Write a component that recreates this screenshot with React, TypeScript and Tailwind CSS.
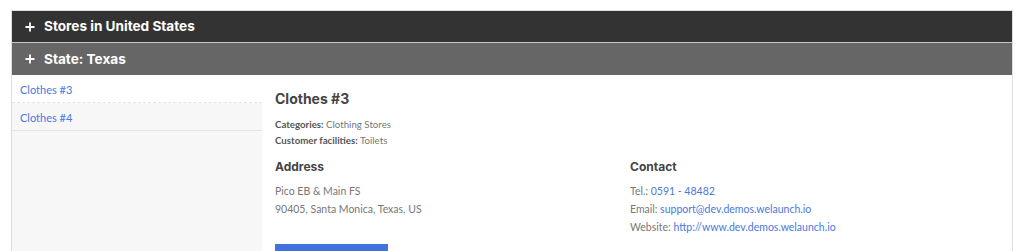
const heading = "font-['Inter','Open_Sans',sans-serif]";
const body = "font-['Lato','Noto_Sans',sans-serif]";

function PlusIcon() {
  return (
    <svg width="10" height="10" viewBox="0 0 10 10" className="shrink-0">
      <path d="M5 0.5v9M0.5 5h9" stroke="#fff" strokeWidth="1.8" />
    </svg>
  );
}

function Bar({ label, dark }: { label: string; dark?: boolean }) {
  return (
    <div
      className={
        "h-[32px] flex items-center gap-[9px] pl-[13px] text-white text-[13.6px] font-bold " +
        heading +
        (dark ? " bg-[#333333] border-b border-[#c8c8c8]" : " bg-[#666666]")
      }
    >
      <PlusIcon />
      <span>{label}</span>
    </div>
  );
}

const stores = ["Clothes #3", "Clothes #4"];

export default function App() {
  return (
    <div className={"w-[1024px] h-[251px] bg-white overflow-hidden pt-[10px] px-[11px] " + body}>
      <div className="border border-[#dddddd] border-b-0">
        <Bar label="Stores in United States" dark />
        <Bar label="State: Texas" />
        <div className="flex h-[200px]">
          <div className="w-[250px] shrink-0 bg-[#f7f7f7]">
            {stores.map((s, i) => (
              <div
                key={s}
                className={
                  "h-[28px] flex items-center pl-[8px] pt-[4px] text-[11px] text-[#4a78e0] border-b " +
                  (i === 0 ? "bg-white border-dashed border-[#e4e4e4]" : "border-[#e6e6e6]")
                }
              >
                {s}
              </div>
            ))}
          </div>
          <div className="flex-1 pl-[13px] pr-[14px] pt-[14px] text-[#777777]">
            <h2 className={"text-[14px] font-bold text-[#444444] leading-[20px] " + heading}>Clothes #3</h2>
            <div className="mt-[7px] text-[9.7px] leading-[16px]">
              <p>
                <span className="font-bold text-[#555555]">Categories:</span> Clothing Stores
              </p>
              <p>
                <span className="font-bold text-[#555555]">Customer facilities:</span> Toilets
              </p>
            </div>
            <div className="grid grid-cols-[355px_1fr] mt-[11px]">
              <div>
                <h3 className={"text-[12px] font-bold text-[#444444] leading-[16px] " + heading}>Address</h3>
                <div className="mt-[7px] text-[10.5px] leading-[18px]">
                  <p>Pico EB &amp; Main FS</p>
                  <p>90405, Santa Monica, Texas, US</p>
                </div>
                <div className="mt-[26px] w-[113px] h-[10px] bg-[#4172e0]" />
              </div>
              <div>
                <h3 className={"text-[12px] font-bold text-[#444444] leading-[16px] " + heading}>Contact</h3>
                <div className="mt-[7px] text-[10.5px] leading-[18px]">
                  <p>
                    Tel.: <span className="text-[#4a78e0]">0591 - 48482</span>
                  </p>
                  <p>
                    Email: <span className="text-[#4a78e0]">support@dev.demos.welaunch.io</span>
                  </p>
                  <p>
                    Website: <span className="text-[#4a78e0]">http://www.dev.demos.welaunch.io</span>
                  </p>
                </div>
              </div>
            </div>
          </div>
        </div>
      </div>
    </div>
  );
}
